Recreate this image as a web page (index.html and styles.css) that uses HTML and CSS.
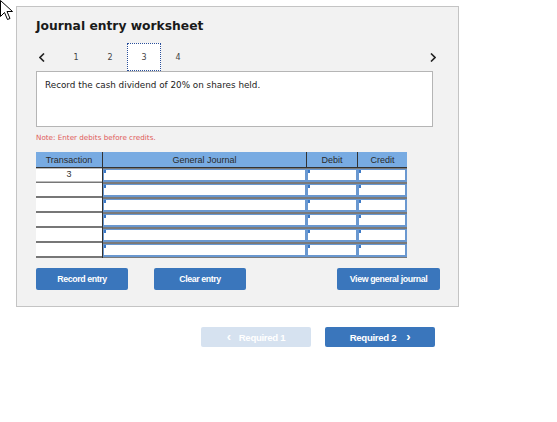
FILE: index.html
```html
<!DOCTYPE html>
<html>
<head>
<meta charset="utf-8">
<link rel="stylesheet" href="styles.css">
</head>
<body>
<svg class="cursor" width="14" height="22" viewBox="0 0 14 22"><path d="M0.5 0.5 L0.5 16.5 L4.5 12.5 L7.5 19.5 L10 18.5 L7 11.5 L12.5 11.5 Z" fill="#fff" stroke="#000" stroke-width="1"/></svg>
<div class="panel">
  <h1 class="title">Journal entry worksheet</h1>
  <div class="tabs">
    <span class="chev">
      <svg width="6" height="9" viewBox="0 0 6 9"><path d="M5 0.5 L1 4.5 L5 8.5" fill="none" stroke="#222" stroke-width="1.6"/></svg>
    </span>
    <span class="tab">1</span>
    <span class="tab">2</span>
    <span class="tab active">3</span>
    <span class="tab">4</span>
    <span class="chev right">
      <svg width="6" height="9" viewBox="0 0 6 9"><path d="M1 0.5 L5 4.5 L1 8.5" fill="none" stroke="#222" stroke-width="1.6"/></svg>
    </span>
  </div>
  <div class="desc">Record the cash dividend of 20% on shares held.</div>
  <div class="note">Note: Enter debits before credits.</div>
  <table class="grid">
    <thead>
      <tr><th class="c-t">Transaction</th><th class="c-j">General Journal</th><th class="c-d">Debit</th><th class="c-c">Credit</th></tr>
    </thead>
    <tbody>
      <tr><td class="tx">3</td><td class="in"><div class="box"></div></td><td class="in"><div class="box"></div></td><td class="in"><div class="box"></div></td></tr>
      <tr><td class="tx"></td><td class="in"><div class="box"></div></td><td class="in"><div class="box"></div></td><td class="in"><div class="box"></div></td></tr>
      <tr><td class="tx"></td><td class="in"><div class="box"></div></td><td class="in"><div class="box"></div></td><td class="in"><div class="box"></div></td></tr>
      <tr><td class="tx"></td><td class="in"><div class="box"></div></td><td class="in"><div class="box"></div></td><td class="in"><div class="box"></div></td></tr>
      <tr><td class="tx"></td><td class="in"><div class="box"></div></td><td class="in"><div class="box"></div></td><td class="in"><div class="box"></div></td></tr>
      <tr><td class="tx"></td><td class="in"><div class="box"></div></td><td class="in"><div class="box"></div></td><td class="in"><div class="box"></div></td></tr>
    </tbody>
  </table>
  <div class="actions">
    <button class="btn b-record">Record entry</button>
    <button class="btn b-clear">Clear entry</button>
    <button class="btn b-view">View general journal</button>
  </div>
</div>
<div class="nav">
  <button class="nbtn prev"><span class="arr">&lsaquo;</span>Required 1</button>
  <button class="nbtn next">Required 2<span class="arr r">&rsaquo;</span></button>
</div>
</body>
</html>
```
FILE: styles.css
```css
html, body { margin: 0; padding: 0; background: #fff; }
body { font-family: "DejaVu Sans", Verdana, sans-serif; color: #222; }
.cursor { position: absolute; left: 0; top: 0; }

.panel {
  margin: 6px 0 0 16px;
  border: 1px solid #c4c4c4;
  background: #f2f2f2;
  padding: 0 0 0 19px;
  box-sizing: border-box;
  width: 443px;
  height: 301px;
}
.title {
  margin: 0;
  padding-top: 11px;
  height: 25px;
  font-size: 12.3px;
  line-height: 16px;
  font-weight: bold;
  color: #1a1a1a;
}
.tabs {
  display: flex;
  align-items: center;
  height: 28px;
  width: 400px;
}
.chev { display: flex; width: 20px; padding-left: 3px; }
.chev.right { margin-left: auto; padding-left: 0; width: 6px; }
.tab {
  width: 34px;
  height: 28px;
  box-sizing: border-box;
  display: flex; align-items: center; justify-content: center;
  font-size: 8px;
  color: #444;
}
.tab.active { background: #fff; border: 1px dotted #2a4f9a; }
.desc {
  width: 397px;
  height: 56px;
  box-sizing: border-box;
  background: #fff;
  border: 1px solid #b5b5b5;
  padding: 8px 0 0 8px;
  font-size: 8.8px;
  color: #222;
}
.note {
  margin-top: 6px;
  height: 19px;
  font-size: 7.2px;
  color: #e05a5a;
}
.grid {
  border-collapse: collapse;
  table-layout: fixed;
  width: 368px;
}
.grid th {
  background: #78abe2;
  font-family: "Liberation Sans", Arial, sans-serif;
  font-weight: normal;
  font-size: 9px;
  color: #2a2a2a;
  height: 15px;
  padding: 0;
  border-bottom: 1px solid #333;
}
.grid th + th { border-left: 1px solid #333; }
.c-t { width: 66px; }
.c-j { width: 203px; }
.c-d { width: 50px; }
.c-c { width: 49px; }
.grid td { padding: 0; height: 15px; }
.tx {
  background: linear-gradient(to bottom, #fff 13px, #777 13px);
  font-family: "Liberation Sans", Arial, sans-serif;
  font-size: 9px;
  line-height: 13px;
  vertical-align: top;
  text-align: center;
  color: #333;
  border-right: 1px solid #333;
}
.in { background: #7a7a7a; vertical-align: top; }
.in .box {
  height: 13px;
  box-sizing: border-box;
  border: 1px solid #6a98d0;
  border-width: 1px 2px 2px 1px;
  background: #fff;
  margin-top: 1px;
  position: relative;
}
.in .box::before {
  content: "";
  position: absolute; left: 0; top: 0;
  width: 2px; height: 3px;
  background: #3c7ac8;
}
.actions {
  display: flex;
  margin-top: 10px;
  width: 404px;
}
.btn {
  height: 22px;
  border: 0;
  border-radius: 2px;
  background: #3a76bc;
  color: #fff;
  font-family: "Liberation Sans", Arial, sans-serif;
  font-weight: bold;
  font-size: 8.8px;
  letter-spacing: -0.4px;
  padding: 0;
}
.b-record { width: 92px; }
.b-clear { width: 92px; margin-left: 26px; }
.b-view { width: 103px; margin-left: auto; }

.nav {
  display: flex;
  margin: 20px 0 0 201px;
  gap: 14px;
}
.nbtn {
  width: 110px;
  height: 20px;
  border: 0;
  border-radius: 2px;
  font-family: "Liberation Sans", Arial, sans-serif;
  font-weight: bold;
  font-size: 9.6px;
  letter-spacing: -0.3px;
  color: #fff;
  padding: 0;
  display: flex; align-items: center; justify-content: center;
}
.prev { background: #d6e2f0; }
.next { background: #3a76bc; }
.arr { font-size: 13px; line-height: 10px; margin-right: 8px; }
.arr.r { margin: 0 0 0 10px; }
```
